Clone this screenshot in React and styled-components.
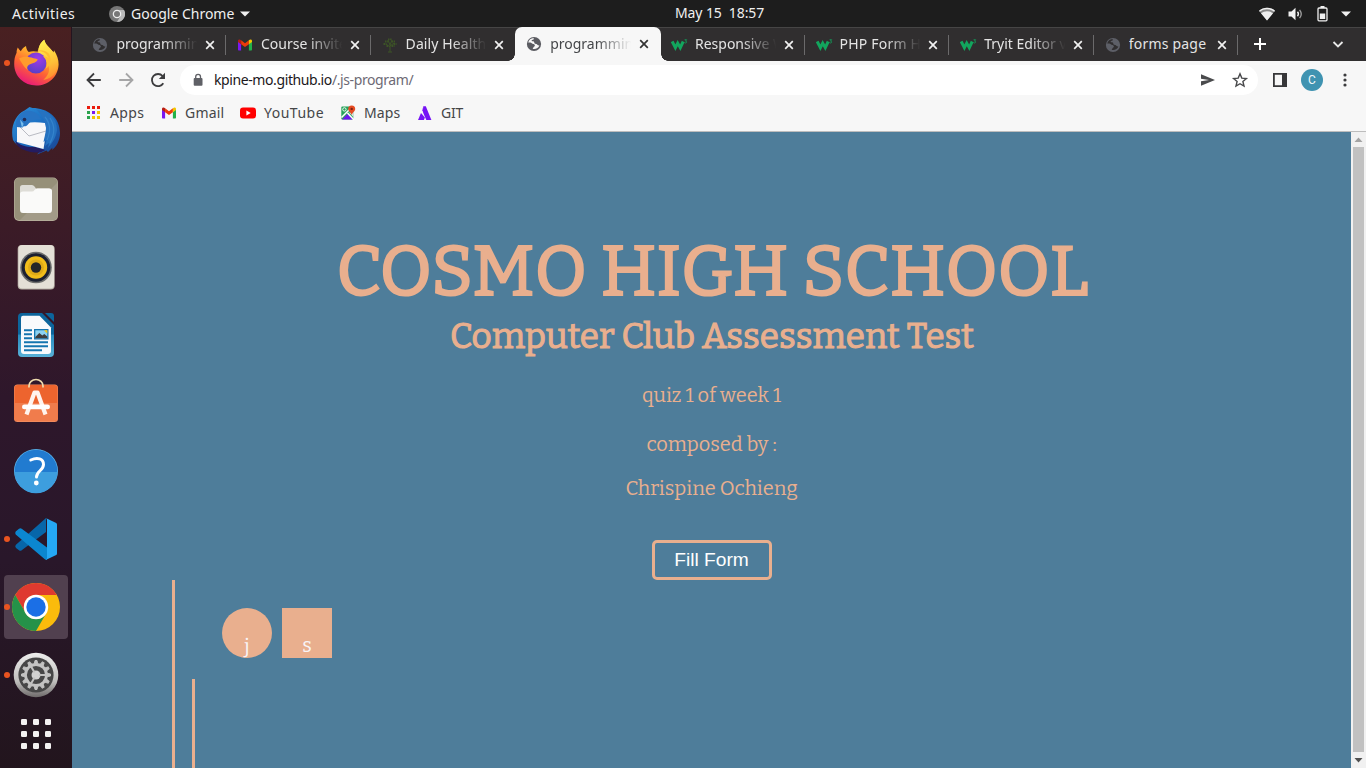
import React from "react";
import styled, { createGlobalStyle } from "styled-components";

const GlobalStyle = createGlobalStyle`
  * { box-sizing: border-box; }
  body { margin: 0; overflow: hidden; font-family: "Noto Sans", "Open Sans", sans-serif; }
  svg { display: block; flex: none; }
`;

const Desktop = styled.div`
  width: 1366px;
  height: 768px;
  display: flex;
  flex-direction: column;
  overflow: hidden;
`;

/* ---------- system bar ---------- */
const SystemBar = styled.header`
  height: 27px;
  flex: none;
  display: grid;
  grid-template-columns: 675px auto 1fr;
  align-items: center;
  background: #1d1d1d;
  color: #f0f0f0;
  font-size: 14px;
  line-height: 25px;
`;
const BarSide = styled.div`
  display: flex;
  align-items: center;
  height: 27px;
  justify-content: ${(p) => (p.$end ? "flex-end" : "flex-start")};
  padding: 0 ${(p) => (p.$end ? "15px" : "0")} 0 ${(p) => (p.$end ? "0" : "12px")};
`;
const BarText = styled.span`
  width: ${(p) => p.$w}px;
  padding-bottom: 1px;
  white-space: pre;
  letter-spacing: ${(p) => p.$ls || 0}px;
`;
const Clock = styled(BarText)`
  padding-bottom: 2px;
`;
const Spacer = styled.span`
  width: ${(p) => p.$w}px;
  flex: none;
`;

const Body = styled.div`
  flex: 1;
  display: flex;
  min-height: 0;
`;

/* ---------- dock ---------- */
const Dock = styled.nav`
  width: 72px;
  flex: none;
  padding: 4px 4px 0;
  display: flex;
  flex-direction: column;
  gap: 4px;
  background: linear-gradient(#492021 0%, #3b1b27 27%, #2e172b 50%, #29172a 72%, #22151d 100%);
  border-right: 1px solid #24141f;
`;
const DockItem = styled.div`
  height: ${(p) => (p.$last ? 46 : 64)}px;
  width: 64px;
  flex: none;
  border-radius: 4px;
  display: flex;
  align-items: center;
  background: ${(p) => (p.$active ? "#51404f" : "transparent")};
`;
const Dot = styled.i`
  width: 6px;
  height: 6px;
  border-radius: 50%;
  margin-right: 2px;
  background: ${(p) => (p.$on ? "#e95420" : "transparent")};
`;

/* ---------- browser ---------- */
const Browser = styled.main`
  flex: 1;
  min-width: 0;
  display: flex;
  flex-direction: column;
`;
const TabStrip = styled.div`
  height: 34px;
  flex: none;
  display: flex;
  padding-left: 9.4px;
  background: #302e2f;
  border-top: 1px solid #464545;
  color: #dedede;
`;
const Tab = styled.div`
  width: 144.6px;
  height: 33px;
  flex: none;
  display: flex;
  align-items: center;
  padding-left: 11px;
  position: relative;
  color: ${(p) => (p.$active ? "#45474a" : "#e4e4e4")};
  &::after {
    content: "";
    width: 1px;
    height: 20px;
    margin-left: 8px;
    background: ${(p) => (p.$rule ? "#6b6a6b" : "transparent")};
  }
`;
const ActiveTab = styled(Tab)`
  background: #f7f7f7;
  border-radius: 7px 7px 0 0;
  margin-top: -1px;
  height: 34px;
  width: 146px;
  margin-right: -1.2px;
  &::before {
    content: "";
    position: absolute;
    left: -7px;
    right: -7px;
    bottom: 0;
    height: 7px;
    background:
      radial-gradient(circle at 0 0, transparent 6.5px, #f7f7f7 7px) left / 7px 7px no-repeat,
      radial-gradient(circle at 100% 0, transparent 6.5px, #f7f7f7 7px) right / 7px 7px no-repeat;
  }
`;
const TabTitle = styled.span`
  width: 84px;
  margin-left: 8px;
  margin-right: 3px;
  padding-bottom: 1px;
  overflow: hidden;
  white-space: nowrap;
  font-size: 14px;
  line-height: 20px;
  letter-spacing: ${(p) => p.$ls || 0}px;
  mask-image: ${(p) => (p.$fade ? "linear-gradient(90deg, #000 55%, transparent 97%)" : "none")};
`;
const Toolbar = styled.div`
  height: 38px;
  flex: none;
  display: flex;
  align-items: center;
  background: #f7f7f7;
  padding-left: 13px;
`;
const AddressBar = styled.div`
  width: 1078px;
  height: 30px;
  margin-left: 13px;
  border-radius: 15px;
  background: #fff;
  display: flex;
  align-items: center;
  padding: 0 9px 0 12px;
  font-size: 14px;
`;
const Url = styled.span`
  flex: 1;
  margin-left: 10px;
  padding-bottom: 2px;
  letter-spacing: ${(p) => p.$ls}px;
  color: #6d6a75;
  b { font-weight: 400; color: #1b1720; }
`;
const Avatar = styled.div`
  width: 22px;
  height: 22px;
  border-radius: 50%;
  background: #3f93b1;
  color: #f1f8fa;
  font: 12px/22px Roboto, sans-serif;
  text-align: center;
`;
const Bookmarks = styled.div`
  height: 33px;
  flex: none;
  background: #f7f7f7;
  border-bottom: 1px solid #bdbdbd;
  display: flex;
  padding: 0 0 5px 14px;
  align-items: center;
`;
const Bookmark = styled.div`
  display: flex;
  align-items: center;
  gap: 8px;
  width: ${(p) => p.$w}px;
  font-size: 14px;
  line-height: 20px;
  letter-spacing: ${(p) => p.$ls || 0}px;
  color: #454648;
  white-space: nowrap;
`;
const Viewport = styled.div`
  flex: 1;
  min-height: 0;
  display: flex;
`;

/* ---------- page ---------- */
const Page = styled.section`
  flex: 1;
  min-width: 0;
  overflow: hidden;
  background: #4e7d9a;
  color: #e9af8e;
  font-family: Bitter, "DejaVu Serif Condensed", "DejaVu Serif", serif;
  font-weight: 370;
`;
const Hero = styled.div`
  height: 448px;
  padding-top: 96px;
  display: flex;
  flex-direction: column;
  align-items: center;
  white-space: nowrap;
`;
const Title = styled.h1`
  margin: 0;
  height: 86px;
  padding: 1px 0 0 2px;
  font-size: 70px;
  line-height: 87px;
  font-weight: 400;
  -webkit-text-stroke: 2.2px #e9af8e;
`;
const Subtitle = styled.h2`
  margin: 0;
  height: 44px;
  padding-left: 1px;
  font-size: 35px;
  line-height: 44px;
  font-weight: 400;
  -webkit-text-stroke: 1.1px #e9af8e;
`;
const Line = styled.p`
  margin: ${(p) => p.$top}px 0 0;
  height: 24px;
  font-size: 20px;
  line-height: 24px;
`;
const FillButton = styled.button`
  width: 120px;
  height: 40px;
  margin-top: 40px;
  padding: 0 0 1px;
  border: 3px solid #e9af8e;
  border-radius: 5px;
  background: transparent;
  color: #fff;
  font: 19.2px "Liberation Sans", Arial, sans-serif;
`;
const OuterRail = styled.div`
  height: 200px;
  margin-left: 100px;
  border-left: 3px solid #e9af8e;
  padding: 28px 0 0 17px;
`;
const InnerRail = styled.div`
  height: 120px;
  margin-top: 21px;
  border-left: 3px solid #e9af8e;
`;
const Badges = styled.div`
  display: flex;
  gap: 10px;
  margin-left: 30px;
`;
const Badge = styled.div`
  width: 50px;
  height: 50px;
  padding-top: 25px;
  border-radius: ${(p) => (p.$round ? "50%" : "0")};
  background: #e9af8e;
  color: #f8f4f6;
  font-size: 20px;
  line-height: 24px;
  text-align: center;
`;

/* ---------- scrollbar ---------- */
const ScrollTrack = styled.div`
  width: 15px;
  flex: none;
  background: #f1f1f1;
  display: flex;
  flex-direction: column;
  align-items: center;
`;
const ScrollThumb = styled.div`
  width: 11px;
  flex: 1;
  background: #c1c1c1;
`;

/* ---------- small icons ---------- */
const Globe = ({ dark }) => (
  <svg width="16" height="16" viewBox="0 0 16 16">
    <circle cx="8" cy="8" r="7.1" fill={dark ? "#5d5f67" : "#5a5b61"} />
    <path
      d="M7.5 2.1C5 2.3 2.8 4 2.2 6.6c1.6-.4 3.2 0 4.1 1 .6.8 1.7.5 2.3 1.1.7.7 0 1.6-.7 2.1-.7.5-.5 1.7-1.5 2 3 .9 6-.6 7-3.2-.8.1-1.8-.2-2.3-1-.6-1-1.7-.3-2.4-1-.9-.8.1-1.6-1-2.2-.8-.4-1.6.1-2-.5-.4-.8 1-1 1.8-1.3.6-.3.2-.9 0-1.5z"
      fill={dark ? "#302e2f" : "#f7f7f7"}
    />
  </svg>
);
const Gmail = () => (
  <svg width="16" height="16" viewBox="0 0 16 16">
    <path d="M1 4.6 4.1 6.8V13.5H2c-.6 0-1-.4-1-1z" fill="#7a18f2" />
    <path d="M11.9 6.8 15 4.6v7.9c0 .6-.4 1-1 1h-2.1z" fill="#22b14a" />
    <path d="M4.1 3.3 8 6.2l3.9-2.9v3.9L8 10.1 4.1 7.2z" fill="#ee3a0b" />
    <path d="M1 4c0-1.5 1.7-2.1 3.1-.7v3.9L1 5z" fill="#b51d16" />
    <path d="M15 4c0-1.5-1.7-2.1-3.1-.7v3.9L15 5z" fill="#f2c500" />
  </svg>
);
const Tree = () => (
  <svg width="16" height="16" viewBox="0 0 16 16" fill="none" stroke="#3d5426">
    <path d="M8 14.8V8M8 10 4 7M8 9l4-3M8 8 6 3m2 5 2-5M6 15h4" strokeWidth="1" />
    <path d="M1.500 7h3M3 4.500h3.500M6 2.300h4M9.500 4.500H13M11.500 7h3M4.500 9h2m3 0h3" strokeWidth="1.800" strokeDasharray="1.500 .6" />
  </svg>
);
const W3 = () => (
  <svg width="18" height="16" viewBox="0 0 18 16" fill="none" stroke="#12a55d">
    <path d="m1.200 4.500 3.200 6.200 2.300-4.600 2.600 4.600 2.900-6.200" strokeWidth="3" />
    <path d="M13.600 2.700h2l-1.100 1.400c1.700-.1 1.500 2-.2 1.900l-.9-.4" strokeWidth=".8" />
  </svg>
);
const Close = ({ dark }) => (
  <svg width="14" height="14" viewBox="0 0 14 14" stroke={dark ? "#333" : "#f1f1f1"} strokeWidth="1.7">
    <path d="m3.2 3.2 7.6 7.6m0-7.6-7.6 7.6" />
  </svg>
);
const Caret = () => (
  <svg width="10" height="6" viewBox="0 0 10 6" fill="#f0f0f0">
    <path d="M0 .5h10L5 5.5z" />
  </svg>
);

const BOOKMARK_ICONS = {
  apps: (
    <svg width="16" height="16" viewBox="0 0 16 16">
      {["#ea1c0d", "#ea1c0d", "#ea1c0d", "#2ba24c", "#7a18f2", "#f2c500", "#2ba24c", "#f2c500", "#f2c500"].map((c, i) => (
        <rect key={i} x={1 + (i % 3) * 5} y={1 + Math.floor(i / 3) * 5} width="3" height="3" fill={c} />
      ))}
    </svg>
  ),
  gmail: <Gmail />,
  youtube: (
    <svg width="16" height="16" viewBox="0 0 16 16">
      <rect x="0" y="2.5" width="16" height="11" rx="3" fill="#f00" />
      <path d="m6.4 5.6 4.3 2.4-4.3 2.4z" fill="#fff" />
    </svg>
  ),
  maps: (
    <svg width="16" height="16" viewBox="0 0 16 16">
      <path d="M2.3 1.5h11v13h-11a1 1 0 0 1-1-1v-11a1 1 0 0 1 1-1z" fill="#27a35b" />
      <path d="m2 14.500 5.500-5.500 5.500 5.500z" fill="#6b17f0" />
      <path d="m1.500 12.500 9-9M7.500 8l6.500 7" stroke="#fff" strokeWidth="1.500" />
      <path d="m9 7.500 4.500 4.800V7z" fill="#d9e2e0" />
      <circle cx="4.400" cy="4.400" r="1.700" fill="none" stroke="#fff" strokeWidth=".9" />
      <path d="M11.700.4a3.500 3.500 0 0 1 3.500 3.500c0 2.200-2.700 3.200-3.500 6-.8-2.800-3.500-3.800-3.500-6A3.500 3.500 0 0 1 11.700.4z" fill="#e64b22" />
      <circle cx="11.700" cy="3.900" r="1.200" fill="#7b2115" />
    </svg>
  ),
  git: (
    <svg width="16" height="16" viewBox="0 0 16 16" fill="#7613f5">
      <path d="M6.300 1.300h2.500L14.400 15H9.300L6.300 8z" />
      <path d="M4 8 7.900 12.500 6.900 15H1z" />
      <path d="M6.300 1.300 5.300 5.500 8.500 11z" />
    </svg>
  ),
};

/* ---------- dock icons ---------- */
const teeth = Array.from({ length: 12 }, (_, i) => i * 30);

const DOCK_ICONS = {
  firefox: (
    <svg width="48" height="48" viewBox="0 0 48 48">
      <defs>
        <linearGradient id="ffBody" x1=".8" y1="0" x2=".3" y2="1">
          <stop offset="0" stopColor="#fff04a" />
          <stop offset=".35" stopColor="#ffb52c" />
          <stop offset=".65" stopColor="#ff6433" />
          <stop offset="1" stopColor="#e7167d" />
        </linearGradient>
        <radialGradient id="ffCore" cx=".6" cy=".3" r=".7">
          <stop offset="0" stopColor="#a03be8" />
          <stop offset="1" stopColor="#5a3fc7" />
        </radialGradient>
        <linearGradient id="ffTail" x1=".4" y1="0" x2=".6" y2="1">
          <stop offset="0" stopColor="#fff150" />
          <stop offset=".6" stopColor="#ffc038" />
          <stop offset="1" stopColor="#ff8a2f" />
        </linearGradient>
      </defs>
      <path d="M5.800 8.500c.9 1.500 1.800 2.700 3 3.800 1.400-2.500 3-4.300 5.200-5.300.3 2.800 1.200 4.700 2.800 6 2.800-.9 6.600-1 9.400.3C26.300 8 28.800 3 32.300.8c.7 3.600 3 6 6 9l3.200 3.600.5-2.200c3 4.500 4.700 9.200 4.600 14.200C46.100 37.800 36.200 46.500 24.200 46.500S2.300 37.700 2.200 25.300c0-4.600.6-8 2.400-11.500-.1-2 .4-3.600 1.200-5.300z" fill="url(#ffBody)" />
      <path d="M26.200 13.300C26.300 8 28.800 3 32.300.8c.7 3.600 3 6 6 9 5 5 8.500 11 7 18-1.500 8-8 13-14 13 5-4 7-9 5-14.500-1.500-5-4.500-7.500-10.100-13z" fill="url(#ffTail)" />
      <circle cx="24" cy="24" r="10.500" fill="url(#ffCore)" />
      <path d="M7 19.500c4-2.400 9-2.200 14.500-.3 2 .2 3.700.6 4.300 1.600-1.500 2.800-5 3.500-8.300 4.700-2.200 1-2.800 3-2 5.500-3.500-3-5-6-8.500-11.500z" fill="#ff9c2d" />
      <path d="M24 12.700c5-1.700 11 1 12.500 6.500-2-1.500-3.500-2-5.500-2 4 3.500 4.700 8.500 2.500 12.500 5.500-3 6.500-11 3-15.500-3.300-3-8.500-4-12.500-1.500z" fill="#ffbd32" />
    </svg>
  ),
  thunderbird: (
    <svg width="48" height="48" viewBox="0 0 48 48">
      <defs>
        <linearGradient id="tb" x1="0" y1="0" x2="1" y2="1">
          <stop offset="0" stopColor="#2e94dc" />
          <stop offset=".5" stopColor="#1b6cc0" />
          <stop offset="1" stopColor="#1a4290" />
        </linearGradient>
      </defs>
      <path d="M1 33C-2 20 3 8 12.500 3.500L17.500 0l3 1C35 1 48 10 48 26c0 8-4 14-8 17l.5-2.500L36 45l-1.500-1.500-9.500 4 4-4C18 44 5 41 1 33z" fill="url(#tb)" />
      <path d="M3 33.500c5 5.500 13 7 20 6.500L33.500 43l-5 2.500C18 46 5 43 3 33.500z" fill="#241c60" />
      <path d="M5 18c7-2.500 17-3.500 28-2l1.500 7-3 19L5 35z" fill="#f7f7f9" />
      <path d="m6 18 11 11 17-5" fill="none" stroke="#b9bbc3" strokeWidth="1" />
      <path d="M4 20C3 13 7 6 14 3.500 22 3 27 7 29 12.500c-6-.5-10 .5-13.500 5.500-1.500 2-4 .5-5 2.500z" fill="#2774c4" />
      <path d="m8 12.500 3.500 4c0 2-1 3-1.500 4.500z" fill="#77bdec" />
      <circle cx="12.500" cy="12.500" r="1.800" fill="#222c56" />
      <path d="M25 3c12 1 20 8 20 20-1 8-5 13-9 18l1-5-4 3 1.500-6-3 2C33 27 36 20 32 13c-2-4-4-7-7-10z" fill="#2672c0" />
      <path d="M33 10c6 7 6 14 2 23M38 11c5 8 5 15 0 25" fill="none" stroke="#3584cc" strokeWidth="1.200" />
    </svg>
  ),
  files: (
    <svg width="48" height="48" viewBox="0 0 48 48">
      <rect x="2" y="2.500" width="44" height="43.500" rx="5" fill="#b4ad99" />
      <rect x="2.700" y="3" width="42.600" height="42" rx="4.500" fill="#969079" />
      <path d="M45 8v33a4 4 0 0 1-4 4H8z" fill="#a29b88" />
      <path d="M8 12.500q0-2.500 2.500-2.500h9.500q1.500 0 2.500 1.500L24 13.500H37q3 0 3 3V24H8z" fill="#deddd7" />
      <path d="M8 19q0-2.500 3-2.500h9q1.500 0 2.500-1.500t3-1.500H37q3 0 3 3v18q0 3.500-3 3.500H11q-3 0-3-3.500z" fill="#fafaf9" />
    </svg>
  ),
  music: (
    <svg width="48" height="48" viewBox="0 0 48 48">
      <rect x="5.700" y="2" width="37" height="44.500" rx="4" fill="#b8b3a8" />
      <rect x="6.500" y="2" width="35.500" height="43.500" rx="4" fill="#e4e0d7" />
      <circle cx="24" cy="24.500" r="15.800" fill="#6c6d6c" />
      <circle cx="24" cy="24.500" r="14.300" fill="#1c2030" />
      <circle cx="24" cy="24.500" r="11.200" fill="#f1bd1b" />
      <circle cx="24" cy="24.500" r="8" fill="#dfaa17" />
      <circle cx="24" cy="24.500" r="5.200" fill="#242529" />
    </svg>
  ),
  writer: (
    <svg width="48" height="48" viewBox="0 0 48 48">
      <defs>
        <linearGradient id="wr" x1="0" y1="0" x2="0" y2="1">
          <stop offset=".48" stopColor="#0c659c" />
          <stop offset=".5" stopColor="#278bbe" />
          <stop offset="1" stopColor="#58b1d7" />
        </linearGradient>
      </defs>
      <path d="M10 2h20l12 12v28a4 4 0 0 1-4 4H10a4 4 0 0 1-4-4V6a4 4 0 0 1 4-4z" fill="url(#wr)" />
      <path d="M33 2h6q3 0 3 3v6z" fill="#0c659c" />
      <path d="M11 4.700h16.500L39 16.500V40q0 3-3 3H12q-3 0-3-3V7q0-2.300 2-2.300z" fill="#f8fafc" />
      <path d="M12 19.200h8M12 23.200h8M12 27.300h8M12 31.300h24M12 35.300h24M12 39.200h18" stroke="#1475af" strokeWidth="1.900" />
      <rect x="22" y="18" width="14.500" height="10.500" fill="#1475af" />
      <rect x="23.300" y="19.300" width="12" height="8" fill="#8bd2f1" />
      <path d="m23.300 26 4-4 3 2.500 2-1.500 3 2.500v1.800h-12z" fill="#3d3d3d" />
      <path d="M32 19.300h3.300V22.500z" fill="#f4c50d" />
    </svg>
  ),
  software: (
    <svg width="48" height="48" viewBox="0 3 48 48" overflow="visible">
      <rect x="2" y="8.500" width="44" height="37.500" rx="3.500" fill="#f28a5c" />
      <rect x="2.500" y="9" width="43" height="36" rx="3.500" fill="#ed642e" />
      <path d="M2.500 27h43v15q0 3-3 3h-37q-3 0-3-3z" fill="#f07c4c" />
      <path d="M17 11.500V10a7 6.500 0 0 1 14 0v1.500" fill="none" stroke="#efdcae" strokeWidth="1.700" />
      <path d="m14.500 38.500 8-22h3L33.500 38.500" fill="none" stroke="#fff4ee" strokeWidth="4.200" strokeLinejoin="round" />
      <rect x="10" y="28.500" width="28" height="4.800" rx="2.400" fill="#fff" />
    </svg>
  ),
  help: (
    <svg width="48" height="48" viewBox="0 0 48 48">
      <circle cx="24" cy="24" r="22" fill="#5cb6ec" />
      <circle cx="24" cy="24" r="21.300" fill="#217bd0" />
      <path d="M2.700 25h42.600a21.300 21.300 0 0 1-42.600 0z" fill="#3d9ede" />
      <path d="M18.800 13c6.500-3 12.700-1.500 12.700 4.500 0 6-7 6.500-7 12.500" fill="none" stroke="#fff" strokeWidth="3" strokeLinecap="round" />
      <circle cx="24.300" cy="36" r="2.400" fill="#fff" />
    </svg>
  ),
  code: (
    <svg width="48" height="48" viewBox="0 0 48 48">
      <path d="M34 3 3.700 30q-1 1.500.3 3L7 35.300q1.500 1 2.700 0L34 17z" fill="#0766a9" />
      <path d="M3.700 16.500 7 13.700q1.500-1 2.700 0L35 32.500V45q-1.500 0-2.500-1L3.700 19.500q-1-1.500 0-3z" fill="#0b87d0" />
      <path d="M33.700 3.100 44.200 8q.8.500.8 1.500v29q0 1-.8 1.500L33.700 45c1-.5 1.300-1.500 1.300-2.500v-37c0-1-.3-2-1.300-2.400z" fill="#25a8f4" />
    </svg>
  ),
  chrome: (
    <svg width="48" height="48" viewBox="0 0 48 48">
      <circle cx="24" cy="24" r="24" fill="#fabb0c" />
      <path d="M24 0a24 24 0 0 1 20.780 12H24a12 12 0 0 0-10.400 18L3.220 12A24 24 0 0 1 24 0z" fill="#df3a2f" />
      <path d="M3.220 12A24 24 0 0 0 24 48l10.400-18a12 12 0 0 1-20.800 0z" fill="#259249" />
      <circle cx="24" cy="24" r="12.200" fill="#fff" />
      <circle cx="24" cy="24" r="9.700" fill="#1b6fe6" />
    </svg>
  ),
  settings: (
    <svg width="48" height="48" viewBox="0 0 48 48">
      <defs>
        <linearGradient id="st" x1="0" y1="0" x2="0" y2="1">
          <stop offset="0" stopColor="#eeeeed" />
          <stop offset=".65" stopColor="#bebdbb" />
          <stop offset="1" stopColor="#6e6a6a" />
        </linearGradient>
      </defs>
      <circle cx="24" cy="24" r="22.300" fill="url(#st)" />
      <circle cx="24" cy="24" r="17.600" fill="#474747" />
      <circle cx="24" cy="24" r="10.500" fill="none" stroke="#c3c3c2" strokeWidth="2.800" />
      {teeth.map((a) => (
        <path key={a} d="m22.400 12.500.6-3h2l.6 3z" fill="#c3c3c2" stroke="#c3c3c2" transform={`rotate(${a} 24 24)`} />
      ))}
      <circle cx="24" cy="24" r="4.500" fill="#d2d2d1" />
      {[90, 210, 330].map((a) => (
        <path key={a} d="M24 14v7" stroke="#c3c3c2" strokeWidth="2" transform={`rotate(${a} 24 24)`} />
      ))}
    </svg>
  ),
  grid: (
    <svg width="48" height="48" viewBox="0 0 48 48" fill="#f4f2f2">
      {[9, 21, 33].map((y) => [9, 21, 33].map((x) => <rect key={`${x}-${y}`} x={x} y={y} width="6" height="6" rx="1.300" />))}
    </svg>
  ),
};

const DOCK = [
  { id: "firefox", on: true },
  { id: "thunderbird" },
  { id: "files" },
  { id: "music" },
  { id: "writer" },
  { id: "software" },
  { id: "help" },
  { id: "code", on: true },
  { id: "chrome", on: true, active: true },
  { id: "settings", on: true },
  { id: "grid", last: true },
];

const TABS = [
  { title: "programming", icon: <Globe dark />, rule: true, fade: true },
  { title: "Course invite", icon: <Gmail />, rule: true, fade: true },
  { title: "Daily Health", icon: <Tree />, fade: true, ls: 0.1 },
  { title: "programming", icon: <Globe />, active: true, fade: true },
  { title: "Responsive W", icon: <W3 />, rule: true, fade: true },
  { title: "PHP Form H", icon: <W3 />, rule: true, fade: true, ls: 0.2 },
  { title: "Tryit Editor v", icon: <W3 />, rule: true, fade: true },
  { title: "forms page", icon: <Globe dark />, rule: true, ls: 0.2 },
];

const IconSlot = styled.span`
  width: 16px;
  height: 16px;
  flex: none;
`;

export default function App() {
  return (
    <Desktop>
      <GlobalStyle />
      <SystemBar>
        <BarSide>
          <BarText $w={97} $ls={0.5}>Activities</BarText>
          <svg width="16" height="16" viewBox="0 0 16 16">
            <circle cx="8" cy="8" r="8" fill="#777" />
            <path d="M8 4h7a8 8 0 0 1-7 12l3.500-6z" fill="#b8b8b8" />
            <circle cx="8" cy="8" r="4.300" fill="#eee" />
            <circle cx="8" cy="8" r="3" fill="#777" />
          </svg>
          <Spacer $w={6} />
          <BarText $w={109}>Google Chrome</BarText>
          <Caret />
        </BarSide>
        <Clock $w={89} $ls={-0.1}>{"May 15  18:57"}</Clock>
        <BarSide $end>
          <svg width="16" height="14" viewBox="0 0 16 14">
            <path d="M0 3.800C4.500-.4 11.500-.4 16 3.800L8 13.500z" fill="#8a8a8a" />
            <path d="M0 3.800C4.500-.4 11.500-.4 16 3.800l-.8 1C11 1.500 5 1.500.8 4.800zM2 6.300c3.500-2.700 8.500-2.700 12 0l-6 7.200z" fill="#f0f0f0" />
          </svg>
          <Spacer $w={13} />
          <svg width="16" height="14" viewBox="0 0 16 14">
            <path d="M.5 4.500h3L7.500.8v12.400L3.500 9.500h-3z" fill="#f0f0f0" />
            <path d="M9.500 4.800q1.800 2.200 0 4.400" fill="none" stroke="#f0f0f0" strokeWidth="1.400" />
            <path d="M11.600 2.800q3.300 4.200 0 8.400" fill="none" stroke="#a0a0a0" strokeWidth="1.300" />
          </svg>
          <Spacer $w={13} />
          <svg width="11" height="16" viewBox="0 0 11 16">
            <path d="M3.500 0h4v2h-4z" fill="#f0f0f0" />
            <rect x="1" y="2" width="9" height="12.800" rx="1" fill="none" stroke="#f0f0f0" strokeWidth="1.300" />
            <path d="M2.800 7.500h5.400V13H2.800z" fill="#f0f0f0" />
          </svg>
          <Spacer $w={13} />
          <Caret />
        </BarSide>
      </SystemBar>

      <Body>
        <Dock>
          {DOCK.map((d) => (
            <DockItem key={d.id} $active={d.active} $last={d.last}>
              <Dot $on={d.on} />
              {DOCK_ICONS[d.id]}
            </DockItem>
          ))}
        </Dock>

        <Browser>
          <TabStrip>
            {TABS.map((t, i) => {
              const Shell = t.active ? ActiveTab : Tab;
              return (
                <Shell key={i} $active={t.active} $rule={t.rule}>
                  <IconSlot>{t.icon}</IconSlot>
                  <TabTitle $fade={t.fade} $ls={t.ls}>{t.title}</TabTitle>
                  <Close dark={t.active} />
                </Shell>
              );
            })}
            <Spacer $w={13.5} />
            <svg width="16" height="33" viewBox="0 0 16 33" stroke="#fff" strokeWidth="2">
              <path d="M2 16h12M8 10v12" />
            </svg>
            <Spacer $w={63} />
            <svg width="14" height="33" viewBox="0 0 14 33" fill="none" stroke="#e8e8e8" strokeWidth="1.800">
              <path d="m2.500 14 4.500 4.500 4.500-4.500" />
            </svg>
          </TabStrip>

          <Toolbar>
            <svg width="18" height="18" viewBox="0 0 18 18" fill="none" stroke="#3c3c3e" strokeWidth="1.800">
              <path d="M15.800 9H3M9 2.500 2.500 9 9 15.500" />
            </svg>
            <Spacer $w={14} />
            <svg width="18" height="18" viewBox="0 0 18 18" fill="none" stroke="#a6a6a7" strokeWidth="1.800">
              <path d="M2.200 9H15M9 2.500 15.500 9 9 15.500" />
            </svg>
            <Spacer $w={14} />
            <svg width="18" height="18" viewBox="0 0 18 18">
              <path d="M14.300 12.200A6.100 6.100 0 1 1 13.600 5" fill="none" stroke="#3c3c3e" strokeWidth="1.800" />
              <path d="M16 1.800V8h-6.200z" fill="#3c3c3e" />
            </svg>
            <AddressBar>
              <svg width="12" height="14" viewBox="0 0 12 14">
                <rect x="1.700" y="5" width="8.800" height="7.700" rx="1" fill="#5f6066" />
                <path d="M3.700 5.500V3.700a2.400 2.400 0 0 1 4.800 0v1.800" fill="none" stroke="#5f6066" strokeWidth="1.300" />
              </svg>
              <Url $ls={-0.4}>
                <b>kpine-mo.github.io</b>/.js-program/
              </Url>
              <svg width="16" height="16" viewBox="0 0 16 16" fill="#4a4b4d">
                <path d="M1 2.200 15 8 1 13.800V9.300L9 8 1 6.700z" />
              </svg>
              <Spacer $w={15} />
              <svg width="18" height="18" viewBox="0 0 18 18" fill="none" stroke="#48494b" strokeWidth="1.400">
                <path d="m9 2.800 1.800 4.300 4.600.4-3.500 3 1.100 4.600L9 12.700l-4 2.400 1.100-4.600-3.500-3 4.600-.4z" />
              </svg>
            </AddressBar>
            <Spacer $w={15} />
            <svg width="14" height="14" viewBox="0 0 14 14">
              <path d="M0 0h14v14H0zM1.800 1.800v10.400h7.200V1.800z" fill="#373739" fillRule="evenodd" />
            </svg>
            <Spacer $w={14} />
            <Avatar>C</Avatar>
            <Spacer $w={19.5} />
            <svg width="4" height="14" viewBox="0 0 4 14" fill="#3c3c3e">
              <circle cx="2" cy="2" r="1.600" />
              <circle cx="2" cy="7" r="1.600" />
              <circle cx="2" cy="12" r="1.600" />
            </svg>
          </Toolbar>

          <Bookmarks>
            <Bookmark $w={75} $ls={0.4}>{BOOKMARK_ICONS.apps}Apps</Bookmark>
            <Bookmark $w={79} $ls={0.2}>{BOOKMARK_ICONS.gmail}Gmail</Bookmark>
            <Bookmark $w={100} $ls={0.5}>{BOOKMARK_ICONS.youtube}YouTube</Bookmark>
            <Bookmark $w={77} $ls={0.1}>{BOOKMARK_ICONS.maps}Maps</Bookmark>
            <Bookmark $w={60} $ls={-0.2}>{BOOKMARK_ICONS.git}GIT</Bookmark>
          </Bookmarks>

          <Viewport>
            <Page>
              <Hero>
                <Title>COSMO HIGH SCHOOL</Title>
                <Subtitle>Computer Club Assessment Test</Subtitle>
                <Line $top={25}>quiz 1 of week 1</Line>
                <Line $top={25}>composed by :</Line>
                <Line $top={20}>Chrispine Ochieng</Line>
                <FillButton>Fill Form</FillButton>
              </Hero>
              <OuterRail>
                <Badges>
                  <Badge $round>j</Badge>
                  <Badge>s</Badge>
                </Badges>
                <InnerRail />
              </OuterRail>
            </Page>
            <ScrollTrack>
              <svg width="15" height="15" viewBox="0 0 15 15" fill="#a3a3a3">
                <path d="M3.500 10 7.500 5.500l4 4.500z" />
              </svg>
              <ScrollThumb />
              <svg width="15" height="16" viewBox="0 0 15 16" fill="#505050">
                <path d="M3.500 6h8l-4 4.500z" />
              </svg>
            </ScrollTrack>
          </Viewport>
        </Browser>
      </Body>
    </Desktop>
  );
}
